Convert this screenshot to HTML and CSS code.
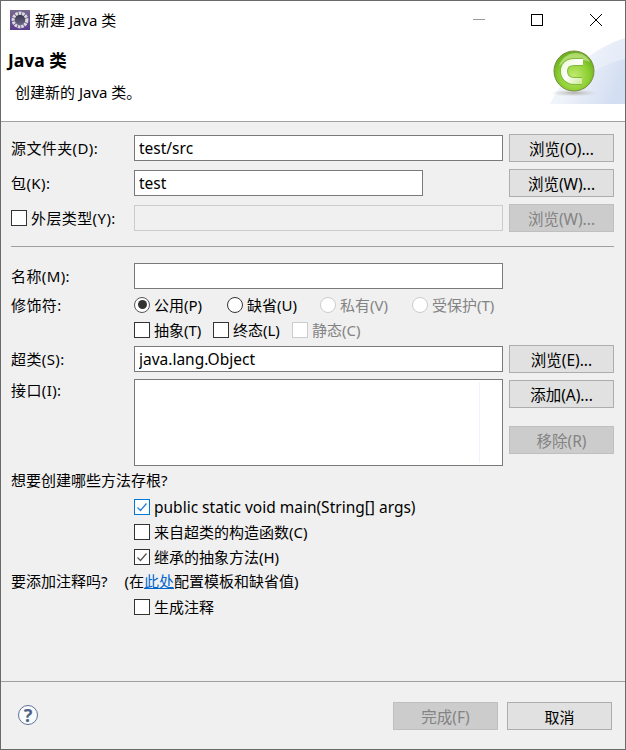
FILE: index.html
```html
<!DOCTYPE html>
<html lang="zh">
<head>
<meta charset="utf-8">
<title>新建 Java 类</title>
<link rel="stylesheet" href="styles.css">
</head>
<body>
<div class="window">
  <div class="titlebar">
    <svg class="app-icon" width="20" height="20" viewBox="0 0 20 20">
      <defs>
        <linearGradient id="appbg" x1="0" y1="0" x2="0" y2="1">
          <stop offset="0" stop-color="#77698f"/><stop offset="1" stop-color="#5a3d8c"/>
        </linearGradient>
        <linearGradient id="appcore" x1="0" y1="0" x2="0" y2="1">
          <stop offset="0" stop-color="#35344a"/><stop offset="1" stop-color="#716c8c"/>
        </linearGradient>
      </defs>
      <rect width="20" height="20" fill="url(#appbg)"/>
      <circle cx="10" cy="10" r="6" fill="url(#appcore)"/>
      <circle cx="10" cy="10" r="6.8" fill="none" stroke="#dcdcdf" stroke-width="3.2" stroke-dasharray="2.6 0.8"/>
    </svg>
    <span class="title-text">新建 Java 类</span>
    <div class="controls">
      <div class="control">
        <svg width="12" height="12" viewBox="0 0 12 12"><path d="M0 5.5H12" stroke="#999" stroke-width="1"/></svg>
      </div>
      <div class="control">
        <svg width="12" height="12" viewBox="0 0 12 12"><rect x="0.5" y="0.5" width="11" height="11" fill="none" stroke="#000"/></svg>
      </div>
      <div class="control">
        <svg width="12" height="12" viewBox="0 0 12 12"><path d="M0 0L12 12M12 0L0 12" stroke="#000" stroke-width="1"/></svg>
      </div>
    </div>
  </div>

  <div class="header">
    <div class="header-title">Java 类</div>
    <div class="header-desc">创建新的 Java 类。</div>
    <svg class="banner" width="75" height="66" viewBox="0 0 75 66">
      <defs>
        <linearGradient id="bn1" x1="0" y1="0" x2="1" y2="0.4">
          <stop offset="0" stop-color="#f8fafd"/><stop offset="1" stop-color="#e3eaf7"/>
        </linearGradient>
        <linearGradient id="bn2" x1="0" y1="0" x2="1" y2="0.3">
          <stop offset="0" stop-color="#f6f8fc"/><stop offset="1" stop-color="#d3def2"/>
        </linearGradient>
        <radialGradient id="ball" cx="0.5" cy="0.62" r="0.6">
          <stop offset="0" stop-color="#c2ea6e"/><stop offset="0.6" stop-color="#8fd034"/><stop offset="1" stop-color="#66ae1a"/>
        </radialGradient>
        <radialGradient id="shadow" cx="0.5" cy="0.5" r="0.5">
          <stop offset="0" stop-color="#a9a9a0" stop-opacity="0.9"/><stop offset="1" stop-color="#c8c8c8" stop-opacity="0"/>
        </radialGradient>
        <linearGradient id="cwhite" x1="0" y1="0" x2="1" y2="1">
          <stop offset="0" stop-color="#eef8da"/><stop offset="0.45" stop-color="#ffffff"/><stop offset="1" stop-color="#cfeb9c"/>
        </linearGradient>
      </defs>
      <path d="M0 66C14 36 42 10 75 0V66Z" fill="url(#bn1)"/>
      <path d="M14 66C28 42 50 26 75 21V66Z" fill="url(#bn2)"/>
      <ellipse cx="24" cy="55" rx="24" ry="3.5" fill="url(#shadow)"/>
      <circle cx="24" cy="33" r="20" fill="url(#ball)" stroke="#7d8a45" stroke-width="1"/>
      <path d="M9 28C12 19 19 15 26 15C33 15 38 19 40 24C32 21 18 21 9 28Z" fill="#d4efa0" opacity="0.6"/>
      <path d="M33 24H24C17 24 14 28 14 33C14 39 18 43 24 43H32" fill="none" stroke="#7fbb3a" stroke-width="8"/>
      <path d="M33 24H24C17 24 14 28 14 33C14 39 18 43 24 43H32" fill="none" stroke="url(#cwhite)" stroke-width="6"/>
    </svg>
  </div>

  <div class="form">
    <div class="row">
      <label class="label">源文件夹(D):</label>
      <input class="field" type="text" value="test/src">
      <button class="btn">浏览(O)...</button>
    </div>
    <div class="row">
      <label class="label">包(K):</label>
      <input class="field field-short" type="text" value="test">
      <button class="btn">浏览(W)...</button>
    </div>
    <div class="row row-last">
      <label class="check-label"><span class="box"></span><span class="label">外层类型(Y):</span></label>
      <input class="field field-off" type="text" disabled>
      <button class="btn btn-off" disabled>浏览(W)...</button>
    </div>

    <div class="sep"></div>

    <div class="row row-tight">
      <label class="label">名称(M):</label>
      <input class="field" type="text">
    </div>
    <div class="opt-row">
      <span class="label">修饰符:</span>
      <div class="opts opts-radio">
        <label class="opt"><span class="radio radio-on"></span><span>公用(P)</span></label>
        <label class="opt"><span class="radio"></span><span>缺省(U)</span></label>
        <label class="opt opt-off"><span class="radio radio-off"></span><span>私有(V)</span></label>
        <label class="opt opt-off"><span class="radio radio-off"></span><span>受保护(T)</span></label>
      </div>
    </div>
    <div class="opt-row">
      <span class="label"></span>
      <div class="opts opts-check">
        <label class="opt"><span class="box"></span><span>抽象(T)</span></label>
        <label class="opt"><span class="box"></span><span>终态(L)</span></label>
        <label class="opt opt-off"><span class="box box-off"></span><span>静态(C)</span></label>
      </div>
    </div>
    <div class="row row-super">
      <label class="label">超类(S):</label>
      <input class="field" type="text" value="java.lang.Object">
      <button class="btn">浏览(E)...</button>
    </div>
    <div class="row-list">
      <label class="label label-top">接口(I):</label>
      <div class="list"><div class="list-inner"></div></div>
      <div class="list-btns">
        <button class="btn">添加(A)...</button>
        <button class="btn btn-off" disabled>移除(R)</button>
      </div>
    </div>

    <div class="line line-stub">想要创建哪些方法存根?</div>
    <label class="opt opt-indent">
      <span class="box box-focus"><svg width="14" height="14" viewBox="0 0 14 14"><path d="M2.5 7.5L5.5 10.5L11.5 3.5" fill="none" stroke="#2a7fd6" stroke-width="1.3"/></svg></span>
      <span class="latin">public static void main(String[] args)</span>
    </label>
    <label class="opt opt-indent"><span class="box"></span><span>来自超类的构造函数(C)</span></label>
    <label class="opt opt-indent">
      <span class="box"><svg width="14" height="14" viewBox="0 0 14 14"><path d="M2.5 7.5L5.5 10.5L11.5 3.5" fill="none" stroke="#555" stroke-width="1.3"/></svg></span>
      <span>继承的抽象方法(H)</span>
    </label>
    <div class="line">要添加注释吗?<span class="hint">(在<a class="link" href="#">此处</a>配置模板和缺省值)</span></div>
    <label class="opt opt-indent"><span class="box"></span><span>生成注释</span></label>
  </div>

  <div class="footer">
    <div class="help"><span class="help-mark">?</span></div>
    <div class="footer-btns">
      <button class="btn btn-off">完成(F)</button>
      <button class="btn btn-plain">取消</button>
    </div>
  </div>
</div>
</body>
</html>
```

FILE: styles.css
```css
* { box-sizing: border-box; }
html, body { margin: 0; padding: 0; }
body {
  font-family: "Noto Sans", "Noto Sans CJK SC", sans-serif;
  font-size: 15px;
  color: #000;
  background: #f0f0f0;
}
.window {
  width: 626px;
  height: 750px;
  border: 1px solid #6a6a6a;
  display: flex;
  flex-direction: column;
  background: #f0f0f0;
  overflow: hidden;
}
.titlebar {
  height: 37px;
  background: #fff;
  display: flex;
  align-items: center;
  padding-left: 9px;
  flex: none;
}
.app-icon { flex: none; margin-top: 1px; }
.title-text { margin-left: 5px; line-height: 20px; margin-top: 1px; }
.controls { margin-left: auto; display: flex; }
.control {
  width: 58.5px;
  height: 37px;
  display: flex;
  align-items: center;
  justify-content: center;
}
.control svg { margin-top: 1px; }

.header {
  position: relative;
  height: 84px;
  background: #fff;
  border-bottom: 1px solid #a0a0a0;
  flex: none;
}
.header-title {
  font-size: 17.5px;
  font-weight: 700;
  line-height: 22px;
  padding: 11px 0 0 7px;
}
.header-desc { line-height: 20px; padding: 11px 0 0 14px; }
.banner { position: absolute; right: 0; top: 0; }

.form { flex: 1; padding: 12px 0 0 10px; }
.row {
  display: grid;
  grid-template-columns: 123px 369px 111px;
  height: 28px;
  margin-bottom: 7px;
  align-items: center;
}
.row .btn { margin-left: 6px; width: 105px; }
.row-last { margin-bottom: 0; }
.row-tight { margin-top: 15px; margin-bottom: 2px; }
.row-super { margin-top: 3px; margin-bottom: 6px; }
.label { line-height: 20px; letter-spacing: 0.4px; }
.field {
  height: 26px;
  width: 100%;
  border: 1px solid #7a7a7a;
  background: #fff;
  padding: 0 4px;
  font: inherit;
  font-size: 15.5px;
  color: #000;
  outline: none;
  border-radius: 0;
}
.field-short { width: 289px; }
.field-off { background: #f0f0f0; border-color: #ccc; }
.btn {
  height: 28px;
  border: 1px solid #adadad;
  background: #e1e1e1;
  font: inherit;
  font-size: 15.5px;
  color: #000;
  padding: 0;
  border-radius: 0;
}
.btn-plain { font-size: 15px; }
.btn-off { background: #ccc; border-color: #bfbfbf; color: #838383; }
.sep { height: 1px; background: #a0a0a0; margin: 14px 11px 0 0; }

.opt-row { display: grid; grid-template-columns: 123px 1fr; height: 25px; align-items: center; }
.opts { display: grid; align-items: center; }
.opts-radio { grid-template-columns: 93px 93px 92px 1fr; }
.opts-check { grid-template-columns: 79px 79px 1fr; }
.opt { display: flex; align-items: center; gap: 4px; line-height: 20px; }
.opt-off { color: #838383; }
.opt-indent { height: 25px; margin-left: 123px; }
.latin { font-size: 15.5px; }
.radio {
  width: 16px;
  height: 16px;
  border-radius: 50%;
  border: 1px solid #333;
  background: #fff;
  display: flex;
  align-items: center;
  justify-content: center;
  flex: none;
}
.radio-on { border: 1.5px solid #555; }
.radio-on::after {
  content: "";
  width: 9px;
  height: 9px;
  border-radius: 50%;
  background: #333;
}
.radio-off { border-color: #ccc; }
.box {
  width: 16px;
  height: 16px;
  border: 1px solid #333;
  background: #fff;
  display: flex;
  align-items: center;
  justify-content: center;
  flex: none;
}
.box-off { border-color: #ccc; }
.box-focus { border-color: #0078d7; }
.check-label { display: flex; align-items: center; gap: 4px; line-height: 20px; }

.row-list {
  display: grid;
  grid-template-columns: 123px 369px 111px;
  height: 87px;
}
.label-top { padding-top: 1px; }
.list {
  height: 87px;
  border: 1px solid #7a7a7a;
  background: #fff;
  padding: 2px 0;
}
.list-inner { width: 345px; height: 100%; border-right: 1px solid #eff3fb; }
.list-btns {
  display: flex;
  flex-direction: column;
  gap: 18px;
  padding: 1px 0 0 6px;
}
.list-btns .btn { width: 105px; }
.line { height: 25px; line-height: 25px; }
.line-stub { margin-top: 2px; height: 26px; }
.hint { margin-left: 17px; }
.link { color: #0066cc; text-decoration: underline; }

.footer {
  height: 68px;
  border-top: 1px solid #a0a0a0;
  display: flex;
  justify-content: space-between;
  padding: 20px 13px 0 17px;
  flex: none;
}
.help {
  width: 20px;
  height: 20px;
  margin-top: 3px;
  border: 1.2px solid #5f7396;
  border-radius: 50%;
  background: #fafbfd;
  display: flex;
  align-items: center;
  justify-content: center;
}
.help-mark { font-size: 18px; line-height: 18px; font-weight: 700; color: #4f6488; }
.footer-btns { display: flex; gap: 9px; }
.footer-btns .btn { width: 105px; }
```
